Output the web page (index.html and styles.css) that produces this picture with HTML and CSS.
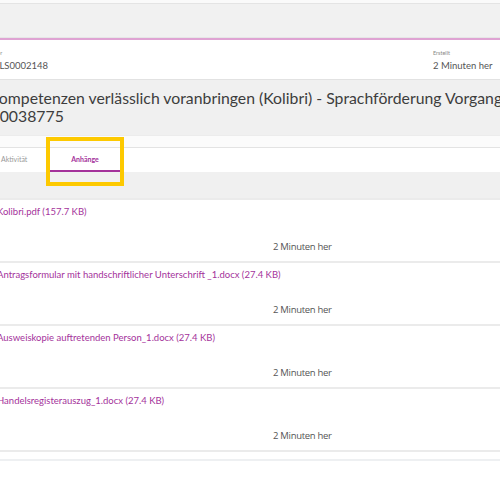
FILE: index.html
```html
<!DOCTYPE html>
<html lang="de">
<head>
<meta charset="utf-8">
<title>Anhänge</title>
<link rel="stylesheet" href="styles.css">
</head>
<body>
<div class="page">
  <div class="topgap"></div>
  <div class="toolbar"></div>
  <div class="accent"></div>
  <div class="meta">
    <div class="meta-col meta-left">
      <div class="meta-label">Nummer</div>
      <div class="meta-value">VLS0002148</div>
    </div>
    <div class="meta-col meta-right">
      <div class="meta-label">Erstellt</div>
      <div class="meta-value">2 Minuten her</div>
    </div>
  </div>
  <div class="title-area">
    <h1 class="title">Kompetenzen verlässlich voranbringen (Kolibri) - Sprachförderung Vorgang<br>V0038775</h1>
  </div>
  <div class="band"></div>
  <div class="tabs">
    <div class="tab">Aktivität</div>
    <div class="tab tab-active">Anhänge<span class="highlight"></span></div>
  </div>
  <div class="tabs-gap"></div>
  <div class="list">
    <div class="item">
      <div class="file">Kolibri.pdf (157.7 KB)</div>
      <div class="time">2 Minuten her</div>
    </div>
    <div class="item">
      <div class="file">Antragsformular mit handschriftlicher Unterschrift _1.docx (27.4 KB)</div>
      <div class="time">2 Minuten her</div>
    </div>
    <div class="item">
      <div class="file">Ausweiskopie auftretenden Person_1.docx (27.4 KB)</div>
      <div class="time">2 Minuten her</div>
    </div>
    <div class="item">
      <div class="file">Handelsregisterauszug_1.docx (27.4 KB)</div>
      <div class="time">2 Minuten her</div>
    </div>
    <div class="list-end"></div>
  </div>
</div>
</body>
</html>
```
FILE: styles.css
```css
html, body {
  margin: 0;
  padding: 0;
  background: #ffffff;
}
body {
  width: 500px;
  height: 500px;
  overflow: hidden;
  font-family: Lato, "Open Sans", "Liberation Sans", sans-serif;
  color: #444;
}
.page {
  width: 500px;
}
.topgap {
  height: 3px;
  background: #fafafa;
}
.toolbar {
  height: 33px;
  background: #f1f1f1;
  border-top: 1px solid #e4e4e4;
}
.accent {
  height: 2px;
  background: #dfa3d3;
  border-top: 1px solid #e6e6e6;
}
.meta {
  height: 39px;
  display: flex;
  justify-content: space-between;
  background: #fff;
  border-bottom: 1px solid #e2e2e2;
}
.meta-col {
  padding-top: 9px;
}
.meta-left {
  margin-left: -7px;
}
.meta-left .meta-label {
  margin-left: -12px;
}
.meta-right {
  width: 67px;
}
.meta-label {
  font-size: 5.5px;
  line-height: 8px;
  color: #888;
}
.meta-value {
  font-size: 9.5px;
  line-height: 12px;
  color: #555;
  margin-top: 3px;
}
.title-area {
  background: #f0f0f0;
  height: 46px;
  padding-top: 9px;
}
.title {
  margin: 0 0 0 -11px;
  font-size: 15.8px;
  font-weight: normal;
  line-height: 18px;
  color: #3d3d3d;
  white-space: nowrap;
}
.band {
  height: 11px;
  background: #fbfbfb;
  border-top: 1px solid #ececec;
  border-bottom: 1px solid #e3e3e3;
}
.tabs {
  display: flex;
  height: 24px;
  background: #fff;
}
.tab {
  font-size: 7px;
  line-height: 22px;
  color: #999;
  padding: 0 0 0 1px;
  width: 49px;
}
.tab-active {
  position: relative;
  width: 70px;
  padding: 0;
  text-align: center;
  color: #a4329b;
  font-weight: bold;
  border-bottom: 2px solid #a4329b;
}
.highlight {
  position: absolute;
  left: -4px;
  top: -11px;
  width: 70px;
  height: 41px;
  border: 4px solid #fdc900;
}
.tabs-gap {
  height: 26px;
  background: #f0f0f0;
}
.list {
  background: #fff;
}
.item {
  height: 55px;
  padding-top: 6px;
  border-top: 2px solid #ebebeb;
}
.file {
  margin-left: -3px;
  font-size: 9.5px;
  line-height: 12px;
  color: #a4329b;
  white-space: nowrap;
}
.time {
  margin-top: 23px;
  padding-left: 273px;
  font-size: 9.5px;
  line-height: 12px;
  color: #555;
  font-family: "Open Sans", "Liberation Sans", sans-serif;
  letter-spacing: -0.3px;
}
.list-end {
  height: 7px;
  border-top: 2px solid #ebebeb;
  border-bottom: 2px solid #eef0f2;
}
```
